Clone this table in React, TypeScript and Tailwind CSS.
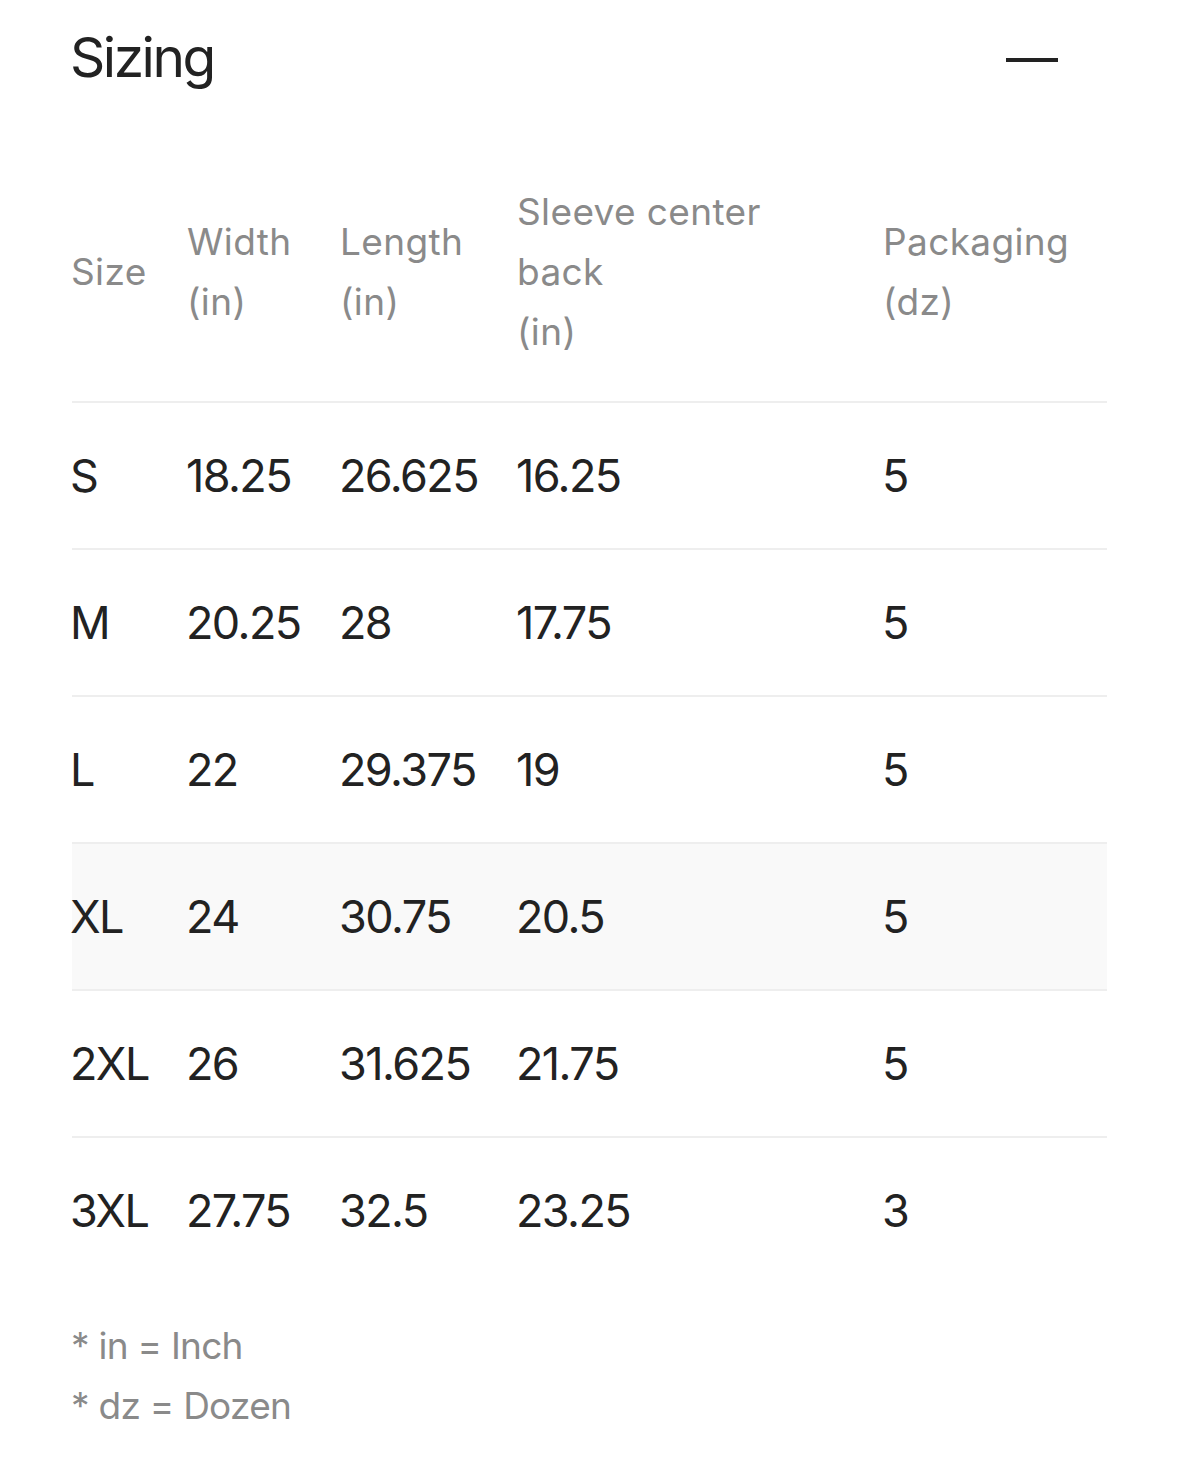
import React from "react";

const rows = [
  ["S", "18.25", "26.625", "16.25", "5"],
  ["M", "20.25", "28", "17.75", "5"],
  ["L", "22", "29.375", "19", "5"],
  ["XL", "24", "30.75", "20.5", "5"],
  ["2XL", "26", "31.625", "21.75", "5"],
  ["3XL", "27.75", "32.5", "23.25", "3"],
];

const cols = "grid grid-cols-[116px_153px_177px_366px_1fr]";

export default function App() {
  return (
    <div
      className="w-[1179px] min-h-[1482px] bg-white px-[72px] pt-[21px]"
      style={{ fontFamily: "Inter, 'Noto Sans', sans-serif" }}
    >
      <div className="flex items-center justify-between h-[72px]">
        <h1 className="-ml-[2px] text-[55px] leading-[72px] tracking-[-0.045em] text-[#222222] font-normal">
          Sizing
        </h1>
        <div className="w-[52px] h-[4px] bg-[#222222] mr-[49px] mt-[5px]" />
      </div>

      <div className="mt-[50px]">
        <div className={`${cols} items-center pt-[39px] pb-[39px] text-[37px] leading-[60px] text-[#8a8a8a] tracking-[0.01em]`}>
          <div className="-ml-[1px]">Size</div>
          <div className="-ml-[1px]">
            Width
            <br />
            (in)
          </div>
          <div className="-ml-[1px]">
            Length
            <br />
            (in)
          </div>
          <div className="-ml-[1px]">
            Sleeve center
            <br />
            back
            <br />
            (in)
          </div>
          <div className="-ml-[1px]">
            Packaging
            <br />
            (dz)
          </div>
        </div>

        {rows.map((r) => (
          <div
            key={r[0]}
            className={`${cols} items-center h-[147px] border-t-[2px] border-[#eeeeee] ${r[0] === "XL" ? "bg-[#f9f9f9]" : ""} text-[45px] text-[#222222] tracking-[-0.035em]`}
          >
            {r.map((c, j) => (
              <div key={j} className="-ml-[2px]">
                {c}
              </div>
            ))}
          </div>
        ))}
      </div>

      <div className="mt-[33px] text-[37px] leading-[60px] text-[#8a8a8a] tracking-[-0.02em]">
        <div className="-ml-[1px]">* in = Inch</div>
        <div className="-ml-[1px]">* dz = Dozen</div>
      </div>
    </div>
  );
}
